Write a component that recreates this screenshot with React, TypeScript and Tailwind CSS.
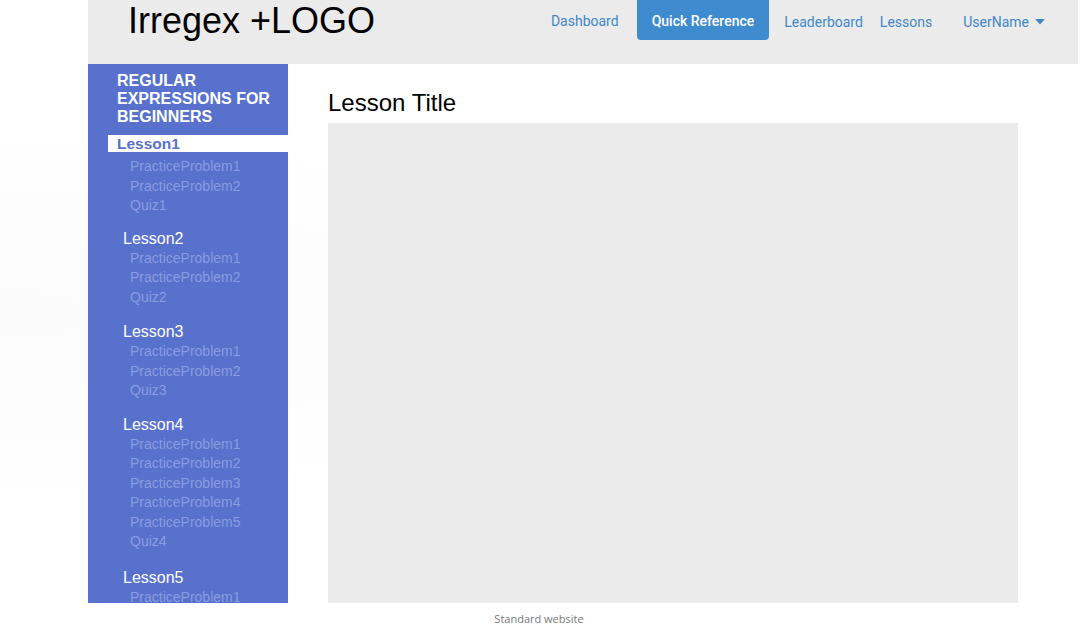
import React from "react";

type Lesson = {
  name: string;
  items: string[];
};

const lessons: Lesson[] = [
  { name: "Lesson1", items: ["PracticeProblem1", "PracticeProblem2", "Quiz1"] },
  { name: "Lesson2", items: ["PracticeProblem1", "PracticeProblem2", "Quiz2"] },
  { name: "Lesson3", items: ["PracticeProblem1", "PracticeProblem2", "Quiz3"] },
  {
    name: "Lesson4",
    items: [
      "PracticeProblem1",
      "PracticeProblem2",
      "PracticeProblem3",
      "PracticeProblem4",
      "PracticeProblem5",
      "Quiz4",
    ],
  },
  { name: "Lesson5", items: ["PracticeProblem1"] },
];

const groupGaps = ["mt-[9px]", "mt-[13px]", "mt-[15px]", "mt-[14px]", "mt-[16px]"];

function Header() {
  return (
    <div className="flex h-[64px] items-start justify-between bg-[#ebebeb] pr-[33px]">
      <span className="pl-[40px] pt-[2px] text-[36px] leading-[38px] text-black font-['Liberation_Sans',Arial,sans-serif]">
        Irregex +LOGO
      </span>
      <nav className="flex items-start text-[14px] text-[#4287c7] font-['Roboto',sans-serif]">
        <a className="flex h-[40px] items-center pt-[3px]">Dashboard</a>
        <a className="ml-[18px] flex h-[40px] items-center rounded-b-[4px] bg-[#3f8bcf] px-[15px] pt-[3px] font-medium text-white">
          Quick Reference
        </a>
        <a className="ml-[15px] flex h-[40px] items-center pt-[5px]">Leaderboard</a>
        <a className="ml-[17px] flex h-[40px] items-center pt-[5px]">Lessons</a>
        <a className="ml-[31px] flex h-[40px] items-center gap-[6px] pt-[5px]">
          UserName
          <svg width="10" height="6" viewBox="0 0 10 6" className="mb-[1px]">
            <path d="M0 0 L10 0 L5 5.5 Z" fill="#4287c7" />
          </svg>
        </a>
      </nav>
    </div>
  );
}

function SideBar() {
  return (
    <div className="w-[200px] shrink-0 overflow-hidden bg-[#5771cd] pt-[8px] font-['Liberation_Sans',Arial,sans-serif]">
      <div className="pl-[29px] pr-[10px] text-[16px] font-bold leading-[18px] text-white">
        REGULAR EXPRESSIONS FOR BEGINNERS
      </div>
      {lessons.map((lesson, i) => (
        <div key={lesson.name} className={groupGaps[i]}>
          {i === 0 ? (
            <div className="ml-[20px] h-[17px] bg-white pl-[9px] text-[15.5px] font-bold leading-[17px] text-[#5771cd]">
              {lesson.name}
            </div>
          ) : (
            <div className="pl-[35px] text-[16px] leading-[20px] text-white">{lesson.name}</div>
          )}
          <div className={i === 0 ? "mt-[5px]" : ""}>
            {lesson.items.map((item) => (
              <div key={item} className="pl-[42px] text-[14px] leading-[19.5px] text-[#8a9cdd]">
                {item}
              </div>
            ))}
          </div>
        </div>
      ))}
    </div>
  );
}

export default function App() {
  return (
    <div className="min-h-screen w-full bg-[radial-gradient(ellipse_at_0%_50%,#fbfbfb_0%,#ffffff_45%)]">
      <div className="ml-[88px] flex w-[990px] flex-col">
        <Header />
        <div className="flex h-[539px]">
          <SideBar />
          <div className="flex flex-1 flex-col pl-[40px] pr-[60px]">
            <h1 className="pt-[25px] text-[24px] leading-[28px] text-black font-['Liberation_Sans',Arial,sans-serif]">
              Lesson Title
            </h1>
            <div className="mt-[6px] flex-1 bg-[#ebebeb]" />
          </div>
        </div>
        <div className="flex h-[28px] items-center justify-center pr-[88px] pt-[4px] text-[11px] text-[#777] font-['Open_Sans',sans-serif]">
          Standard website
        </div>
      </div>
    </div>
  );
}
